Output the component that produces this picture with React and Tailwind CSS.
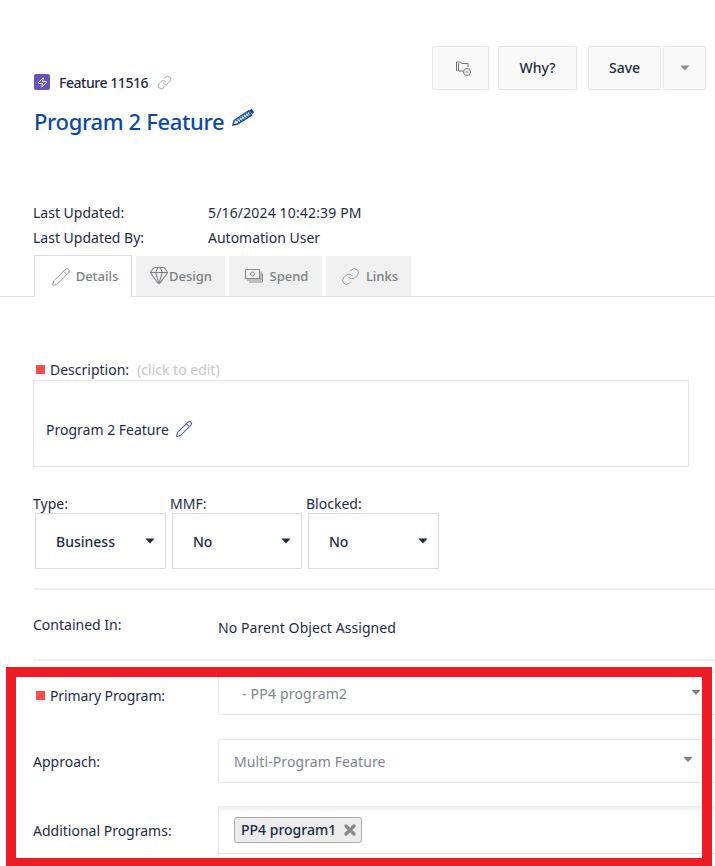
import React from "react";
import { Link, Pencil, Gem, Zap, X } from "lucide-react";

function Caret({ className }) {
  return (
    <svg width="12" height="7" viewBox="0 0 12 7" className={className}>
      <path d="M0.5 0.5h11L6 6.5z" fill="currentColor" />
    </svg>
  );
}

function FolderIcon() {
  return (
    <svg width="17" height="17" viewBox="0 0 17 17" fill="none" stroke="#6b7280" strokeWidth="1" className="ml-[6px]">
      <path d="M1.5 11V2h4l1 1.5h6.5V7" />
      <path d="M3.5 3.5V11h5" />
      <circle cx="12" cy="12" r="3.5" />
      <path d="M10.5 12h3" />
    </svg>
  );
}

function SpendIcon() {
  return (
    <svg width="18" height="15" viewBox="0 0 18 15" fill="none" stroke="#8a8a8a" strokeWidth="1">
      <rect x="0.5" y="0.5" width="14" height="9" />
      <circle cx="7.5" cy="5" r="2" />
      <path d="M16 2.5v8.5H2M17.5 4.5v8.5H4" />
    </svg>
  );
}

// the hatched pencil beside the title
function TitlePencil() {
  return (
    <svg width="23" height="18" viewBox="0 0 23 18" fill="none" className="ml-[8px] -mt-[8px]">
      <path d="M1 17l1.2-4.6L16.5 3l3 4.2L5.5 16z" fill="#fff" stroke="#0b4aa8" strokeWidth="1.4" />
      <path d="M4.5 12.8l12-8.2M6 14.5l12-8.2" stroke="#0b4aa8" strokeWidth="1.6" strokeDasharray="1.5 1" />
      <path d="M17 2.4l2.6-1.6 2.6 3.4-2.2 2z" fill="#0b4aa8" />
    </svg>
  );
}

function Tab({ active, className, children }) {
  return (
    <div
      className={
        "flex items-center justify-center text-[13px] font-medium text-[#7c7f85] " +
        (active
          ? "h-[42px] bg-white border border-b-0 border-[#dedede] -mb-px relative"
          : "h-[40px] bg-[#f0f0f0] mt-px pt-px") +
        " " +
        className
      }
    >
      {children}
    </div>
  );
}

function SmallSelect({ label, className, textClass }) {
  return (
    <div
      className={
        "h-[56px] border border-[#dcdcdc] flex items-center justify-between pr-[10px] font-medium " +
        className
      }
    >
      <span className={textClass}>{label}</span>
      <Caret className="text-[#1b2a4a] w-[10px] h-[6px] -mt-[1px]" />
    </div>
  );
}

function Required() {
  return <span className="w-[9px] h-[9px] bg-[#ff4d4f] mr-[5px] inline-block shrink-0" />;
}

export default function App() {
  return (
    <div className="relative w-[715px] h-[866px] overflow-hidden bg-white font-['Noto_Sans',sans-serif] text-[14px] text-[#1c2b4a]">
      {/* header */}
      <div className="flex justify-between h-[200px] pl-[34px] pr-[9px]">
        <div className="pt-[73px]">
          <div className="flex items-center h-[18px] font-medium">
            <span className="w-[16px] h-[16px] rounded-[2px] bg-[#6554c0] flex items-center justify-center">
              <Zap size={11} color="#fff" strokeWidth={2} />
            </span>
            <span className="ml-[9px] tracking-[-0.45px]">Feature 11516</span>
            <Link size={15} color="#7f8ca6" strokeWidth={1.25} className="ml-[9px]" />
          </div>
          <div className="flex items-center mt-[12px] h-[36px] text-[22px] tracking-[-0.35px] font-medium text-[#0b4aa8]">
            Program 2 Feature
            <TitlePencil />
          </div>
        </div>
        <div className="flex pt-[46px] h-[90px] font-medium">
          <div className="w-[57px] h-[44px] bg-[#f9f9f9] border border-[#e6e6e6] rounded-[2px] flex items-center justify-center">
            <FolderIcon />
          </div>
          <div className="w-[79px] h-[44px] ml-[9px] pb-[2px] bg-[#f9f9f9] border border-[#e6e6e6] rounded-[2px] flex items-center justify-center">
            Why?
          </div>
          <div className="w-[73px] h-[44px] ml-[11px] pb-[2px] bg-[#f9f9f9] border border-[#e6e6e6] rounded-[2px] flex items-center justify-center">
            Save
          </div>
          <div className="w-[43px] h-[44px] ml-[2px] bg-[#f9f9f9] border border-[#e6e6e6] rounded-[2px] flex items-center justify-center">
            <Caret className="text-[#8b8f99] w-[10px] h-[6px]" />
          </div>
        </div>
      </div>

      {/* last updated */}
      <div className="pl-[33px]">
        <div className="flex h-[25px] items-center">
          <span className="w-[175px]">Last Updated:</span>
          <span className="tracking-[0.15px]">5/16/2024 10:42:39 PM</span>
        </div>
        <div className="flex h-[25px] items-center">
          <span className="w-[175px]">Last Updated By:</span>
          <span>Automation User</span>
        </div>
      </div>

      {/* tabs */}
      <div className="flex mt-[5px] pl-[34px] h-[41px] border-b border-[#dedede] box-content">
        <Tab active className="w-[98px] pl-[3px]">
          <Pencil size={20} strokeWidth={1} color="#7c7f85" className="mr-[5px]" />
          Details
        </Tab>
        <Tab className="w-[89px] ml-[4px]">
          <Gem size={20} strokeWidth={1.25} color="#7c7f85" className="-mt-[4px]" />
          Design
        </Tab>
        <Tab className="w-[93px] ml-[4px] pl-[2px]">
          <SpendIcon />
          <span className="ml-[7px]">Spend</span>
        </Tab>
        <Tab className="w-[85px] ml-[4px] pl-[2px]">
          <Link size={19} strokeWidth={1} color="#7c7f85" className="mr-[6px]" />
          Links
        </Tab>
      </div>

      {/* description */}
      <div className="pl-[33px] pr-[26px] pt-[62px]">
        <div className="flex items-center h-[20px] pl-[3px]">
          <Required />
          <span>Description:</span>
          <span className="ml-[8px] text-[#c8c8c8]">(click to edit)</span>
        </div>
        <div className="h-[87px] mt-px border border-[#e6e6e6] flex items-center pl-[12px] pt-[12px]">
          Program 2 Feature
          <Pencil size={18} strokeWidth={1.4} color="#4a62a8" className="ml-[6px] -mt-[2px]" />
        </div>
      </div>

      {/* type, mmf, blocked */}
      <div className="flex pl-[33px] mt-[26px] h-[20px] items-center">
        <span className="w-[137px]">Type:</span>
        <span className="w-[136px]">MMF:</span>
        <span>Blocked:</span>
      </div>
      <div className="flex gap-[6px] pl-[35px]">
        <SmallSelect label="Business" className="w-[131px]" textClass="ml-[20px]" />
        <SmallSelect label="No" className="w-[130px]" textClass="ml-[20px]" />
        <SmallSelect label="No" className="w-[131px]" textClass="ml-[20px]" />
      </div>

      <div className="ml-[33px] mt-[19px] h-[2px] bg-[#efefef]" />

      {/* contained in */}
      <div className="flex pl-[33px] h-[69px]">
        <span className="w-[185px] mt-[25px] h-[20px] leading-[20px]">Contained In:</span>
        <span className="mt-[28px] h-[20px] leading-[20px] tracking-[0.08px]">No Parent Object Assigned</span>
      </div>

      <div className="ml-[33px] h-[2px] bg-[#efefef]" />

      {/* programs */}
      <div className="pl-[33px] mt-[11px]">
        <div className="flex h-[43px]">
          <div className="w-[185px] shrink-0 flex items-center pl-[3px] mt-[13px] h-[20px]">
            <Required />
            <span className="tracking-[-0.1px]">Primary Program:</span>
          </div>
          <div className="w-[600px] shrink-0 h-[43px] border border-[#e8e8e8] rounded-[3px] text-[#7d8590] flex pl-[23px] pt-[10px] tracking-[0.2px]">
            - PP4 program2
          </div>
        </div>
        <div className="flex h-[43px] mt-[24px]">
          <div className="w-[185px] shrink-0 flex items-center pt-[2px]">Approach:</div>
          <div className="w-[600px] shrink-0 h-[44px] border border-[#e8e8e8] rounded-[3px] text-[#7d8590] flex items-center pl-[15px] tracking-[0.1px]">
            Multi-Program Feature
          </div>
        </div>
        <div className="flex mt-[24px] h-[48px]">
          <div className="w-[185px] shrink-0 flex items-center">Additional Programs:</div>
          <div className="w-[600px] shrink-0 h-[48px] border-b border-l border-[#e6e6e6] shadow-[inset_0_6px_6px_-4px_rgba(0,0,0,0.1)] flex items-center pl-[15px]">
            <span className="h-[26px] flex items-center pl-[6px] pr-[3px] border border-[#aaaaaa] rounded-[3px] bg-[#ececec] font-medium">
              PP4 program1
              <X size={16} strokeWidth={5} color="#8a8a8a" className="ml-[6px]" />
            </span>
          </div>
        </div>
      </div>

      <Caret className="absolute left-[691px] top-[689px] w-[10px] h-[7px] text-[#808080]" />
      <Caret className="absolute left-[683px] top-[756px] w-[10px] h-[7px] text-[#808080]" />
      {/* annotation frame */}
      <div className="absolute left-[6px] top-[667px] w-[706px] h-[199px] border-[10px] border-b-[8px] border-[#ed1c24] pointer-events-none" />
    </div>
  );
}
